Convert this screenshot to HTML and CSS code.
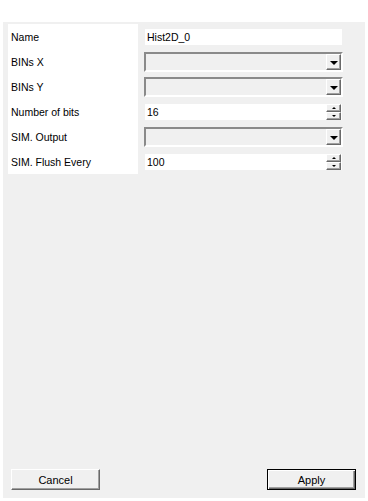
FILE: index.html
```html
<!DOCTYPE html>
<html lang="en">
<head>
    <meta charset="UTF-8">
    <title>Hist2D</title>
    <link rel="stylesheet" href="styles.css">
</head>
<body>
    <div class="panel">
        <div class="form">
            <div class="label-col">
                <div class="row">Name</div>
                <div class="row">BINs X</div>
                <div class="row">BINs Y</div>
                <div class="row">Number of bits</div>
                <div class="row">SIM. Output</div>
                <div class="row">SIM. Flush Every</div>
            </div>
            <div class="field-col">
                <div class="row">
                    <div class="text-box">Hist2D_0</div>
                </div>
                <div class="row">
                    <div class="combo"><span class="drop-btn"><i class="arrow-down"></i></span></div>
                </div>
                <div class="row">
                    <div class="combo"><span class="drop-btn"><i class="arrow-down"></i></span></div>
                </div>
                <div class="row">
                    <div class="text-box spin">
                        <span class="value">16</span>
                        <span class="spin-btns">
                            <span class="spin-btn"><i class="arrow-up small"></i></span>
                            <span class="spin-btn"><i class="arrow-down small"></i></span>
                        </span>
                    </div>
                </div>
                <div class="row">
                    <div class="combo"><span class="drop-btn"><i class="arrow-down"></i></span></div>
                </div>
                <div class="row">
                    <div class="text-box spin">
                        <span class="value">100</span>
                        <span class="spin-btns">
                            <span class="spin-btn"><i class="arrow-up small"></i></span>
                            <span class="spin-btn"><i class="arrow-down small"></i></span>
                        </span>
                    </div>
                </div>
            </div>
        </div>
        <div class="footer">
            <button class="win-btn">Cancel</button>
            <button class="win-btn default">Apply</button>
        </div>
    </div>
</body>
</html>
```

FILE: styles.css
```css
* {
    margin: 0;
    padding: 0;
    box-sizing: border-box;
}
body {
    background: #fff;
    font-family: "Liberation Sans", Arial, sans-serif;
    font-size: 10.5px;
    color: #000;
}
.panel {
    margin: 22px 3px 0 3px;
    height: 476px;
    background: #f0f0f0;
    display: flex;
    flex-direction: column;
    justify-content: space-between;
    padding: 2px 9px 8px 5px;
}
.form {
    display: flex;
    flex-direction: row;
}
.label-col {
    width: 130px;
    background: #fff;
}
.label-col .row {
    padding-left: 3px;
}
.row {
    height: 25px;
    display: flex;
    align-items: center;
}
.field-col {
    margin-left: 6px;
    width: 199px;
    display: flex;
    flex-direction: column;
}
.text-box {
    margin-left: 1px;
    margin-top: 1px;
    width: 197px;
    height: 16px;
    background: #fff;
    padding-left: 2px;
    display: flex;
    align-items: center;
}
.text-box.spin {
    justify-content: space-between;
    padding-right: 1px;
}
.combo {
    margin-top: 1px;
    width: 199px;
    height: 20px;
    background: #f0f0f0;
    border-top: 2px solid #8a8a8a;
    border-left: 2px solid #8a8a8a;
    border-right: 2px solid #fff;
    border-bottom: 2px solid #fff;
    display: flex;
    justify-content: flex-end;
}
.drop-btn {
    width: 15px;
    height: 16px;
    background: #f0f0f0;
    border-top: 1px solid #fff;
    border-left: 1px solid #fff;
    border-right: 1px solid #696969;
    border-bottom: 1px solid #696969;
    box-shadow: inset -1px -1px 0 #a0a0a0;
    display: flex;
    justify-content: center;
    align-items: center;
}
.spin-btns {
    height: 16px;
    display: flex;
    flex-direction: column;
}
.spin-btn {
    width: 15px;
    height: 8px;
    background: #f0f0f0;
    border-top: 1px solid #fff;
    border-left: 1px solid #fff;
    border-right: 1px solid #696969;
    border-bottom: 1px solid #696969;
    box-shadow: inset -1px -1px 0 #a0a0a0;
    display: flex;
    justify-content: center;
    align-items: center;
}
.arrow-down {
    display: block;
    width: 0;
    height: 0;
    border-style: solid;
    border-width: 4px 4px 0 4px;
    border-color: #000 transparent transparent transparent;
    margin-top: 1px;
}
.arrow-up {
    display: block;
    width: 0;
    height: 0;
    border-style: solid;
    border-width: 0 2px 2px 2px;
    border-color: transparent transparent #000 transparent;
}
.arrow-down.small {
    border-width: 2px 2px 0 2px;
    margin-top: 0;
}
.footer {
    display: flex;
    justify-content: space-between;
    padding-left: 3px;
}
.win-btn {
    width: 89px;
    height: 21px;
    background: #f0f0f0;
    font-family: "Liberation Sans", Arial, sans-serif;
    font-size: 11px;
    color: #000;
    border-top: 1px solid #fff;
    border-left: 1px solid #fff;
    border-right: 1px solid #696969;
    border-bottom: 1px solid #696969;
    box-shadow: inset -1px -1px 0 #a0a0a0;
    outline: none;
}
.win-btn.default {
    border: 1px solid #000;
    box-shadow: inset 1px 1px 0 #fff, inset -1px -1px 0 #696969, inset -2px -2px 0 #a0a0a0;
}
```
